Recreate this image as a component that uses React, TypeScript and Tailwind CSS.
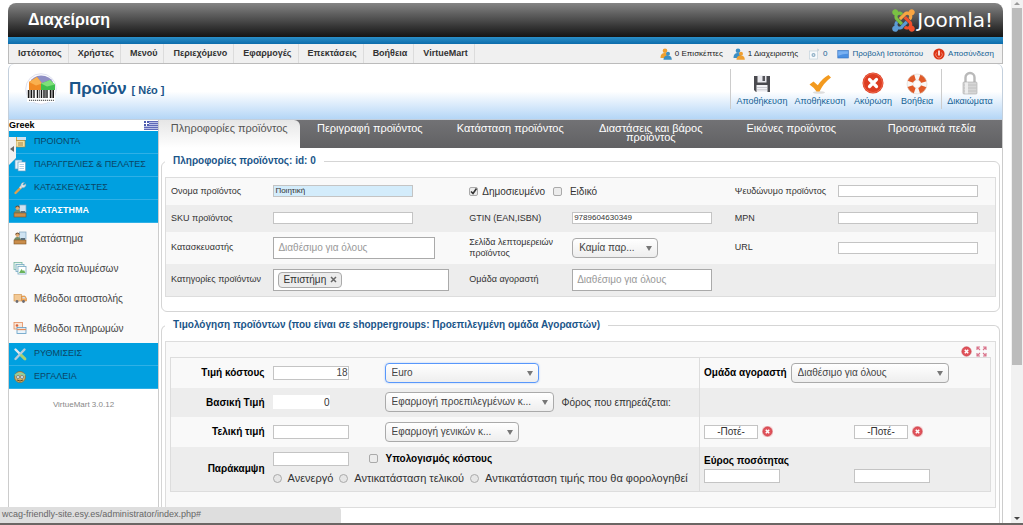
import { useState, type ReactNode } from "react";

const menuItems = [
  "Ιστότοπος",
  "Χρήστες",
  "Μενού",
  "Περιεχόμενο",
  "Εφαρμογές",
  "Επεκτάσεις",
  "Βοήθεια",
  "VirtueMart",
];

const tabs = [
  "Πληροφορίες προϊόντος",
  "Περιγραφή προϊόντος",
  "Κατάσταση προϊόντος",
  "Διαστάσεις και βάρος προϊόντος",
  "Εικόνες προϊόντος",
  "Προσωπικά πεδία",
];

function JoomlaMark() {
  return (
    <svg viewBox="0 28 448 456" className="size-[23px]" aria-hidden="true">
      <path fill="#7ac143" d="M.6 92.1C.6 58.8 27.4 32 60.4 32c30 0 54.5 21.9 59.2 50.2 32.6-7.6 67.1.6 96.5 30l-44.3 44.3c-20.5-20.5-42.6-16.3-55.4-3.5-14.3 14.3-14.3 37.9 0 52.2l99.5 99.5-44 44.3c-87.7-87.2-49.7-49.7-99.8-99.7-26.8-26.5-35-64.8-24.8-98.9C20.4 144.6.6 120.7.6 92.1z" />
      <path fill="#f9a541" d="M130.1 208.5l44.3 44.3c10-10 89.7-89.7 99.7-99.8 14.3-14.3 37.6-14.3 51.9 0 12.8 12.8 17 35-3.5 55.4l44 44.3c31.2-31.2 38.5-67.6 28.9-101.2 29.2-4.1 51.9-29.2 51.9-59.5 0-33.2-26.8-60.1-59.8-60.1-30.3 0-55.4 22.5-59.5 51.6-33.8-9.9-71.7-1.5-98.3 25.1-18.3 19.1-71.1 71.5-99.6 99.9z" />
      <path fill="#f2502c" d="M396.4 360.7c8.2-32.7-.9-68.5-26.3-93.9-11.8-12.2 5 4.7-99.5-99.7l-44.3 44.3 99.7 99.7c14.3 14.3 14.3 37.6 0 51.9-12.8 12.8-35 17-55.4-3.5l-44 44.3c27.6 30.2 68 38.8 102.7 28 5.5 27.4 29.7 48.1 58.9 48.1 33 0 59.8-26.8 59.8-60.1 0-30.2-22.5-55-51.6-59.1z" />
      <path fill="#5b9bd5" d="M312.1 307.6l-44-44.3c-87 86.4-50.4 50.4-99.7 99.8-14.3 14.3-37.6 14.3-51.9 0-13.1-13.4-16.9-35.3 3.2-55.4l-44-44.3c-30.2 30.2-38 65.2-29.5 98.3-26.7 6-46.2 29.9-46.2 58.2C0 453.2 26.8 480 59.8 480c28.6 0 52.5-19.8 58.6-46.7 32.7 8.2 68.5-.6 94.2-26 32.1-32 12.2-12.4 99.5-99.7z" />
    </svg>
  );
}

function UsersIcon({ front = "#3c8fc4", back = "#f0a030" }: { front?: string; back?: string }) {
  return (
    <svg viewBox="0 0 12 12" className="size-3" aria-hidden="true">
      <circle cx="5" cy="2.8" r="2.3" fill={back} />
      <path d="M0.5 10c0-4 2-5 4.5-5s3.500 1.500 3.500 5z" fill={back} />
      <circle cx="8" cy="5.800" r="2" fill={front} />
      <path d="M3.500 11.800c0-3.200 2-4.300 4.300-4.300s4 1.100 4 4.300z" fill={front} />
    </svg>
  );
}

function MailIcon() {
  return (
    <svg viewBox="0 0 12 12" className="size-3" aria-hidden="true">
      <rect x="1.500" y="3" width="8" height="8" fill="#f7fafc" stroke="#c4d3dd" strokeWidth=".7" />
      <circle cx="5.500" cy="7" r="2" fill="#8fb0c6" />
      <circle cx="5.500" cy="7" r=".8" fill="#f7fafc" />
      <path d="M9 1l2 1-2 1" fill="none" stroke="#c4d3dd" />
    </svg>
  );
}

function ScreenIcon() {
  return (
    <svg viewBox="0 0 12 12" className="size-3" aria-hidden="true">
      <rect x=".8" y="2.500" width="10.500" height="7.500" fill="#4b90e2" stroke="#2f6fc0" strokeWidth=".6" />
      <path d="M1.200 3.200h9.700v2.500q-5 0-9.700 2z" fill="#79b1f2" />
    </svg>
  );
}

function PowerIcon() {
  return (
    <svg viewBox="0 0 12 12" className="size-3" aria-hidden="true">
      <circle cx="6" cy="6" r="5.600" fill="#dc3415" />
      <path d="M6 2.500v5" stroke="#fff" strokeWidth="1.600" />
      <path d="M3.500 4.500a3.300 3.300 0 1 0 5 0" fill="none" stroke="#f29a86" strokeWidth=".8" />
    </svg>
  );
}

function ProductIcon() {
  return (
    <svg viewBox="0 0 32 32" className="size-8" aria-hidden="true">
      <circle cx="16" cy="16" r="15.300" fill="#fdfdff" stroke="#d6d9ea" strokeWidth=".8" />
      <path d="M5 9q3-6 11-6.500Q25 3 28 9l-5 3H10z" fill="#8f8fc4" />
      <path d="M4 9l8-5 5 6.500V18H4z" fill="#f08a24" />
      <path d="M4 9l8-5 5 6.500-6 2z" fill="#f9b04f" />
      <path d="M16 10.500L25 7l5 4.500V18H16z" fill="#3fbf4f" />
      <path d="M16 10.500L25 7l5 4.500-8 2z" fill="#7fe07a" />
      <rect x="2" y="17" width="28" height="12" fill="#fff" />
      <path d="M3.500 17v8M6.500 17v8M9 17v8M12.500 17v8M16.500 17v8M19 17v8M22 17v8M25.500 17v8M28.300 17v8" stroke="#161616" strokeWidth="1.400" />
      <path d="M5 17v8M14.500 17v8M20.500 17v8M27 17v8" stroke="#161616" strokeWidth=".6" />
      <path d="M4 27.300h25" stroke="#666" strokeWidth="1.200" strokeDasharray="1.200 .8" />
    </svg>
  );
}

function FloppyIcon() {
  return (
    <svg viewBox="0 0 24 24" className="size-6" aria-hidden="true">
      <path d="M4 5h16v16H6l-2-2z" fill="#4a4a4f" />
      <rect x="7.500" y="4.500" width="9" height="7" fill="#e9e9ee" />
      <rect x="12.500" y="5" width="2.500" height="5" fill="#55555a" />
      <rect x="6.500" y="14" width="11" height="7" fill="#f3f3f6" />
      <path d="M7 16.500h10M7 18.800h10" stroke="#c9c9d0" />
    </svg>
  );
}

function CheckIcon() {
  return (
    <svg viewBox="0 0 24 24" className="size-6" aria-hidden="true">
      <ellipse cx="11" cy="21.500" rx="6" ry="1.300" fill="#ddd" />
      <path d="M1.500 13.500l4-3 4.300 3.800Q14 7.500 20.500 4l2.500 2.500Q15.500 12 11.500 20.500H8.500Q6 16.500 1.500 13.500z" fill="#f39a1f" />
    </svg>
  );
}

function CancelIcon() {
  return (
    <svg viewBox="0 0 24 24" className="size-6" aria-hidden="true">
      <circle cx="12" cy="12" r="10.500" fill="#dd3d22" />
      <circle cx="12" cy="12" r="9.500" fill="none" stroke="#ee6a50" strokeWidth="1" />
      <path d="M8.500 8.500l7 7M15.500 8.500l-7 7" stroke="#fff" strokeWidth="3.200" strokeLinecap="round" />
    </svg>
  );
}

function SmallCancelIcon() {
  return (
    <svg viewBox="0 0 11 11" className="size-[11px]" aria-hidden="true">
      <circle cx="5.500" cy="5.500" r="4.700" fill="#e0525a" stroke="#c8404a" strokeWidth=".6" />
      <path d="M3.800 3.800l3.400 3.400M7.200 3.800L3.800 7.200" stroke="#fff" strokeWidth="1.600" />
    </svg>
  );
}

function LifebuoyIcon() {
  return (
    <svg viewBox="0 0 24 24" className="size-6" aria-hidden="true">
      <circle cx="12" cy="13" r="7" fill="none" stroke="#f9f6f4" strokeWidth="6" />
      <circle cx="12" cy="13" r="7" fill="none" stroke="#e05a28" strokeWidth="6" strokeDasharray="6.500 4.496" strokeDashoffset="-2.250" />
      <circle cx="12" cy="13" r="10" fill="none" stroke="#dcd3cd" strokeWidth=".6" />
      <circle cx="12" cy="13" r="3.800" fill="#fdfdfd" stroke="#ddd" strokeWidth=".5" />
    </svg>
  );
}

function LockIcon() {
  return (
    <svg viewBox="0 0 24 24" className="size-6" aria-hidden="true">
      <path d="M7.500 12V6.500a4.500 4.500 0 0 1 9 0V12" fill="none" stroke="#b9b9b9" strokeWidth="2.400" />
      <rect x="5" y="11" width="14" height="12" rx="1" fill="#d6d6d6" stroke="#aaa" strokeWidth=".6" />
      <path d="M5.500 14h13M5.500 17h13M5.500 20h13" stroke="#bdbdbd" strokeWidth=".8" />
      <rect x="7" y="11.500" width="3" height="11" fill="#ececec" />
    </svg>
  );
}

function SideIcon({ kind }: { kind: string }) {
  return (
    <svg viewBox="0 0 14 14" className="size-3.5 shrink-0" aria-hidden="true">
      {kind === "products" && (
        <>
          <rect x="1" y="2" width="10" height="10" fill="#d9a441" />
          <path d="M4 2h9v3H4z" fill="#cfe3f2" />
          <rect x="3" y="5.500" width="9" height="6.500" fill="#f3dfa0" stroke="#a98238" strokeWidth=".6" />
          <path d="M5 8h5M5 10h5" stroke="#8a6d35" strokeWidth=".8" />
        </>
      )}
      {kind === "orders" && (
        <>
          <rect x="2" y="2" width="7" height="9" fill="#e6f2fa" stroke="#5f9cc4" strokeWidth=".7" />
          <rect x="5" y="4" width="7.500" height="9" fill="#fff" stroke="#5f9cc4" strokeWidth=".7" />
          <path d="M6.500 6.500h4.500M6.500 8.500h4.500M6.500 10.500h4.500" stroke="#9cc4de" strokeWidth=".8" />
        </>
      )}
      {kind === "wrench" && (
        <>
          <path d="M2.500 12L8 6.500" stroke="#e2a04a" strokeWidth="2.400" strokeLinecap="round" />
          <path d="M7 7l2-2" stroke="#dfe6ea" strokeWidth="2.400" />
          <path d="M8 5.500a3 3 0 0 1 3.500-4L9.800 3.300l1 1 2-1.500a3 3 0 0 1-4 3.700z" fill="#dfe6ea" stroke="#8aa0ad" strokeWidth=".5" />
        </>
      )}
      {kind === "shop" && (
        <>
          <rect x="6.500" y="1" width="6.500" height="7" fill="#cfe3f2" stroke="#7fa6c2" strokeWidth=".7" />
          <circle cx="4.500" cy="4" r="2" fill="#e0ab72" />
          <path d="M2.500 3.500q2-3 4 0" fill="none" stroke="#6a4a2c" strokeWidth="1.200" />
          <path d="M1 10q0-4 3.500-4T8 10z" fill="#6f8c6a" />
          <rect x="1" y="9" width="12" height="4" fill="#c98d4b" stroke="#7d5527" strokeWidth=".6" />
          <path d="M8 7h4v2H8z" fill="#5b6c78" />
        </>
      )}
      {kind === "media" && (
        <>
          <rect x="1" y="1.500" width="8" height="7" fill="#e8f5ee" stroke="#74b3a0" strokeWidth=".8" />
          <rect x="3" y="3.500" width="8" height="7" fill="#e8f5ee" stroke="#74a9c4" strokeWidth=".8" />
          <rect x="5" y="5.500" width="8" height="7.500" fill="#fff" stroke="#74a9c4" strokeWidth=".8" />
          <path d="M6 12l2.500-4 1.500 2 1-1 1.500 3z" fill="#69b35a" />
        </>
      )}
      {kind === "truck" && (
        <>
          <rect x="1" y="3.500" width="7.500" height="6.500" fill="#f3c995" stroke="#d49a55" strokeWidth=".7" />
          <path d="M8.500 5H12l1.500 2.500V10h-5z" fill="#f3a95c" stroke="#d48a3d" strokeWidth=".6" />
          <path d="M9.500 6h2l1 1.500h-3z" fill="#cfe3f2" />
          <circle cx="4" cy="10.500" r="1.400" fill="#6b6b72" />
          <circle cx="10.500" cy="10.500" r="1.400" fill="#6b6b72" />
        </>
      )}
      {kind === "payment" && (
        <>
          <rect x="1" y="1.500" width="8.500" height="6.500" fill="#fbe6d6" stroke="#e38e5e" strokeWidth=".8" />
          <circle cx="4" cy="4.500" r="1.300" fill="#d9653b" />
          <rect x="4" y="6.500" width="9" height="6" fill="#eaf4fb" stroke="#5f9cc4" strokeWidth=".8" />
          <path d="M4 8.500h9" stroke="#e38e5e" strokeWidth="1.300" />
        </>
      )}
      {kind === "settings" && (
        <>
          <path d="M2.500 2.500l9 9" stroke="#e3e9ee" strokeWidth="2.400" strokeLinecap="round" />
          <path d="M11.500 2.500l-9 9.500" stroke="#b7cbd8" strokeWidth="2.400" strokeLinecap="round" />
          <path d="M8.500 8.500l3.500 3.500" stroke="#a9cf6e" strokeWidth="2.800" strokeLinecap="round" />
        </>
      )}
      {kind === "tools" && (
        <>
          <circle cx="7" cy="7" r="5.500" fill="#d2b06a" stroke="#7f6a35" strokeWidth=".7" />
          <path d="M2 5.500q5-4 10 0" fill="none" stroke="#8fd0a0" strokeWidth="2" />
          <circle cx="5" cy="7" r="1.500" fill="#e9f3f7" stroke="#54707c" strokeWidth=".7" />
          <circle cx="9" cy="7" r="1.500" fill="#e9f3f7" stroke="#54707c" strokeWidth=".7" />
          <path d="M4 10q3 2 6 0" fill="none" stroke="#6b4d1f" />
        </>
      )}
    </svg>
  );
}

function GreekFlag() {
  return (
    <svg viewBox="0 0 14 9" className="h-[9px] w-3.5" aria-hidden="true">
      <rect width="14" height="9" fill="#b9bfe6" />
      <path d="M0 .5h14M0 2.500h14M0 4.500h14M0 6.500h14M0 8.500h14" stroke="#5f69b8" />
      <rect width="5" height="5" fill="#4d5bb0" />
      <path d="M2.500 0v5M0 2.500h5" stroke="#fff" />
    </svg>
  );
}

function StatusItem({ icon, children, link }: { icon: ReactNode; children: ReactNode; link?: boolean }) {
  const body = (
    <>
      {icon}
      {children}
    </>
  );
  return link ? (
    <a href="#" className="flex items-center gap-[3px] text-[#146295]">{body}</a>
  ) : (
    <span className="flex items-center gap-[3px] text-[#222]">{body}</span>
  );
}

function ToolButton({ icon, label, width }: { icon: ReactNode; label: string; width: string }) {
  return (
    <button type="button" className={`flex flex-col items-center text-[9px] leading-3 text-[#146295] ${width}`}>
      {icon}
      {label}
    </button>
  );
}

function SideHead({ kind, label, active }: { kind: string; label: string; active?: boolean }) {
  return (
    <a
      href="#"
      className={`flex h-[23px] items-center gap-[7px] border-b border-[#2fb0e6] bg-[#00a0e0] pl-1 text-[9px] whitespace-nowrap ${active ? "font-bold text-white" : "text-[#0b4666]"}`}
    >
      <SideIcon kind={kind} />
      {label}
    </a>
  );
}

function SideLink({ kind, label }: { kind: string; label: string }) {
  return (
    <a href="#" className="flex h-[30px] items-center gap-[7px] pl-1 text-[10px] text-[#444]">
      <SideIcon kind={kind} />
      {label}
    </a>
  );
}

function Tick({ id, checked }: { id: string; checked?: boolean }) {
  return (
    <span className="relative inline-block size-[9px] shrink-0">
      <input
        id={id}
        type="checkbox"
        defaultChecked={checked}
        className="peer block size-[9px] appearance-none rounded-[2px] border border-[#aaa] bg-[#ececec]"
      />
      <svg viewBox="0 0 9 9" className="pointer-events-none absolute inset-0 hidden size-[9px] peer-checked:block" aria-hidden="true">
        <path d="M2 4.500l2 2 3.500-5" fill="none" stroke="#333" strokeWidth="1.600" />
      </svg>
    </span>
  );
}

function TextInput({ id, label, value = "", className }: { id: string; label?: string; value?: string; className: string }) {
  return (
    <input
      id={id}
      aria-label={label}
      type="text"
      defaultValue={value}
      className={`block border border-[#c4c4c4] outline-none ${className}`}
    />
  );
}

function Picker({ id, label, option, width, focused }: { id: string; label?: string; option: string; width: string; focused?: boolean }) {
  return (
    <span className={`relative inline-block ${width}`}>
      <select
        id={id}
        aria-label={label}
        className={`block h-5 w-full appearance-none rounded border bg-linear-to-b from-white to-[#eeeeee] pl-1.5 text-[10px] leading-4 text-[#444] outline-none ${focused ? "border-[#5897fb] shadow-[0_0_2px_#a9c8f5]" : "border-[#aaa]"}`}
      >
        <option>{option}</option>
      </select>
      <svg viewBox="0 0 6 5" className="pointer-events-none absolute top-2 right-1.5 h-[5px] w-1.5" aria-hidden="true">
        <path d="M0 0h6L3 5z" fill="#777" />
      </svg>
    </span>
  );
}

const cellLabel = "pl-[5px] text-left text-[9px] font-normal leading-[11px]";
const priceLabel = "pr-2 text-right text-[10px] text-black";
const boxInput = "h-3 w-[140px] bg-white px-px text-[8px]";
const priceInput = "h-3.5 w-[76px] bg-white text-right text-[10px] text-[#444]";

export default function App() {
  const [override, setOverride] = useState("");
  return (
    <div className="flex h-screen overflow-hidden bg-white font-['Liberation_Sans',Arial,sans-serif] text-[10px] text-[#333]">
      <div className="flex min-w-0 flex-1 flex-col pt-[3px] pr-2 pl-2">
        <header>
          <div className="flex h-[34px] items-center justify-between rounded-t-lg bg-linear-to-b from-[#858585] via-[#4c4c4c] to-[#151515] pr-2.5 pl-5">
            <h1 className="text-[16px] font-bold text-white">Διαχείριση</h1>
            <div className="flex items-center gap-0.5 font-['DejaVu_Sans',sans-serif] text-[20px] leading-6 text-white">
              <JoomlaMark />
              <span>Joomla!</span>
            </div>
          </div>
          <div className="h-[7px] bg-linear-to-b from-[#2a8fc8] to-[#0b6cab]" />
          <div className="flex h-5 items-center justify-between border-x border-b border-[#bbb] bg-[#f0f0f0]">
            <nav className="flex h-full text-[9px] font-bold text-[#333]">
              {menuItems.map((item) => (
                <a key={item} href="#" className="flex items-center border-r border-[#dcdcdc] pr-1.5 pl-[9px]">
                  {item}
                </a>
              ))}
            </nav>
            <div className="flex items-center gap-2.5 pr-2 text-[8px]">
              <StatusItem icon={<UsersIcon />}>0 Επισκέπτες</StatusItem>
              <StatusItem icon={<UsersIcon front="#f0a030" back="#3c8fc4" />}>1 Διαχειριστής</StatusItem>
              <StatusItem icon={<MailIcon />} link>0</StatusItem>
              <StatusItem icon={<ScreenIcon />} link>Προβολή Ιστοτόπου</StatusItem>
              <StatusItem icon={<PowerIcon />} link>Αποσύνδεση</StatusItem>
            </div>
          </div>
          <div className="flex h-14 items-center justify-between rounded-t-md border-x border-b border-[#c3cfdc] bg-linear-to-b from-white from-50% to-[#b4d6f6] pr-2 pb-1.5 pl-4">
            <div className="flex items-center gap-3">
              <ProductIcon />
              <h2 className="text-[17px] font-bold text-[#1a5589]">
                Προϊόν <small className="text-[11px]">[ Νέο ]</small>
              </h2>
            </div>
            <div className="flex items-center">
              <div className="flex h-10 items-center gap-2 border-l border-[#ccc] pr-2 pl-1.5">
                <ToolButton icon={<FloppyIcon />} label="Αποθήκευση" width="w-[50px]" />
                <ToolButton icon={<CheckIcon />} label="Αποθήκευση" width="w-[50px]" />
                <ToolButton icon={<CancelIcon />} label="Ακύρωση" width="w-10" />
                <ToolButton icon={<LifebuoyIcon />} label="Βοήθεια" width="w-8" />
              </div>
              <div className="flex h-10 items-center border-l border-[#ccc] pl-1">
                <ToolButton icon={<LockIcon />} label="Δικαιώματα" width="w-12" />
              </div>
            </div>
          </div>
        </header>

        <div className="flex min-h-0 flex-1">
          <aside className="relative w-[151px] shrink-0 border-x border-[#ccc]">
            <div className="flex h-[11px] items-center justify-between text-[9px] leading-[11px] font-bold text-black">
              Greek
              <GreekFlag />
            </div>
            <nav>
              <SideHead kind="products" label="ΠΡΟΙΟΝΤΑ" />
              <SideHead kind="orders" label="ΠΑΡΑΓΓΕΛΙΕΣ & ΠΕΛΑΤΕΣ" />
              <SideHead kind="wrench" label="ΚΑΤΑΣΚΕΥΑΣΤΕΣ" />
              <SideHead kind="shop" label="ΚΑΤΑΣΤΗΜΑ" active />
              <div className="bg-[#fafafa]">
                <SideLink kind="shop" label="Κατάστημα" />
                <SideLink kind="media" label="Αρχεία πολυμέσων" />
                <SideLink kind="truck" label="Μέθοδοι αποστολής" />
                <SideLink kind="payment" label="Μέθοδοι πληρωμών" />
              </div>
              <SideHead kind="settings" label="ΡΥΘΜΙΣΕΙΣ" />
              <SideHead kind="tools" label="ΕΡΓΑΛΕΙΑ" />
            </nav>
            <p className="pt-2.5 text-center text-[8px] text-[#888]">VirtueMart 3.0.12</p>
            <button type="button" aria-label="Σύμπτυξη μενού" className="absolute top-[17px] left-0 h-7 w-[7px]">
              <svg viewBox="0 0 7 28" className="h-7 w-[7px]" aria-hidden="true">
                <path d="M0 0h7v21l-7 7z" fill="#f1f1f1" />
                <path d="M5 9v6l-4-3z" fill="#666" />
              </svg>
            </button>
          </aside>

          <main className="min-w-0 flex-1 border-r border-[#ccc]">
            <div role="tablist" className="flex h-[28px] bg-linear-to-b from-[#727275] to-[#616163]">
              {tabs.map((tab, index) => (
                <button
                  key={tab}
                  type="button"
                  role="tab"
                  aria-selected={index === 0}
                  className={`flex min-w-0 flex-1 justify-center px-4 pt-1 text-[11px] leading-[9px] ${index === 0 ? "rounded-tr-md bg-linear-to-b from-[#e6e6e6] to-white whitespace-nowrap text-[#555]" : "text-white"}`}
                >
                  {tab}
                </button>
              ))}
            </div>

            <fieldset className="mx-0.5 mt-[7px] rounded-md border border-[#d5d5d5] px-[3px] pb-3.5">
              <legend className="px-2 text-[10px] leading-3 font-bold text-[#1a5589]">Πληροφορίες προϊόντος: id: 0</legend>
              <table className="mt-2.5 w-full table-fixed border border-[#ddd]">
                <colgroup>
                  <col className="w-[13%]" />
                  <col className="w-[23%]" />
                  <col className="w-[13%]" />
                  <col className="w-[19%]" />
                  <col className="w-[13%]" />
                  <col className="w-[19%]" />
                </colgroup>
                <tbody>
                  <tr className="h-[27px] bg-[#f9f9f9]">
                    <th className={cellLabel}><label htmlFor="name">Ονομα προϊόντος</label></th>
                    <td><TextInput id="name" value="Ποιητική" className="h-3 w-[140px] bg-[#d3ecfb] px-px text-[8px]" /></td>
                    <td colSpan={2} className="pl-[5px]">
                      <div className="flex items-center gap-1 text-[10px]">
                        <Tick id="published" checked />
                        <label htmlFor="published" className="pr-1">Δημοσιευμένο</label>
                        <Tick id="special" />
                        <label htmlFor="special" className="pl-1">Ειδικό</label>
                      </div>
                    </td>
                    <th className={cellLabel}><label htmlFor="alias">Ψευδώνυμο προϊόντος</label></th>
                    <td><TextInput id="alias" className={boxInput} /></td>
                  </tr>
                  <tr className="h-[27px] bg-[#ededed]">
                    <th className={cellLabel}><label htmlFor="sku">SKU προϊόντος</label></th>
                    <td><TextInput id="sku" className={boxInput} /></td>
                    <th className={cellLabel}><label htmlFor="gtin">GTIN (EAN,ISBN)</label></th>
                    <td><TextInput id="gtin" value="9789604630349" className={boxInput} /></td>
                    <th className={cellLabel}><label htmlFor="mpn">MPN</label></th>
                    <td><TextInput id="mpn" className={boxInput} /></td>
                  </tr>
                  <tr className="h-8 bg-[#f9f9f9]">
                    <th className={cellLabel}><label htmlFor="maker">Κατασκευαστής</label></th>
                    <td>
                      <input id="maker" placeholder="Διαθέσιμο για όλους" className="block h-[22px] w-[162px] border border-[#aaa] bg-white px-1 text-[10px] placeholder:text-[#999]" />
                    </td>
                    <th className={cellLabel}><label htmlFor="details">Σελίδα λεπτομερειών<br />προϊόντος</label></th>
                    <td><Picker id="details" option="Καμία παρ..." width="w-[86px]" /></td>
                    <th className={cellLabel}><label htmlFor="url">URL</label></th>
                    <td><TextInput id="url" className={boxInput} /></td>
                  </tr>
                  <tr className="h-[33px] bg-[#ededed]">
                    <th className={cellLabel}><label htmlFor="categories">Κατηγορίες προϊόντων</label></th>
                    <td>
                      <div className="flex h-[22px] w-[176px] items-center border border-[#aaa] bg-white pl-1">
                        <span className="flex h-4 items-center gap-1 rounded-sm border border-[#aaa] bg-[#ececec] px-1 text-[10px]">
                          Επιστήμη
                          <button type="button" aria-label="Αφαίρεση">
                            <svg viewBox="0 0 7 7" className="size-[7px]" aria-hidden="true">
                              <path d="M1 1l5 5M6 1L1 6" stroke="#666" strokeWidth="1.500" />
                            </svg>
                          </button>
                        </span>
                        <input id="categories" className="w-0 flex-1 outline-none" />
                      </div>
                    </td>
                    <th className={cellLabel}><label htmlFor="buyers">Ομάδα αγοραστή</label></th>
                    <td>
                      <input id="buyers" placeholder="Διαθέσιμο για όλους" className="block h-[22px] w-[140px] border border-[#aaa] bg-white px-1 text-[10px] placeholder:text-[#999]" />
                    </td>
                    <td colSpan={2} />
                  </tr>
                </tbody>
              </table>
            </fieldset>

            <fieldset className="mx-0.5 mt-[7px] rounded-t-md border border-b-0 border-[#d5d5d5] px-[3px] pb-5">
              <legend className="px-2 text-[10px] leading-3 font-bold text-[#1a5589]">
                Τιμολόγηση προϊόντων (που είναι σε shoppergroups: Προεπιλεγμένη ομάδα Αγοραστών)
              </legend>
              <div className="mt-2.5 border border-[#ddd] bg-[#f9f9f9] px-1 pb-[15px]">
                <div className="flex h-[15px] items-end justify-end gap-1 pr-1">
                  <button type="button" aria-label="Διαγραφή τιμής"><SmallCancelIcon /></button>
                  <button type="button" aria-label="Μετακίνηση">
                    <svg viewBox="0 0 11 11" className="size-[11px]" aria-hidden="true">
                      <path d="M1 4V1h3M7 1h3v3M10 7v3H7M4 10H1V7M1 1l3 3M10 1L7 4M10 10L7 7M1 10l3-3" fill="none" stroke="#d9728a" strokeWidth="1.100" />
                    </svg>
                  </button>
                </div>
                <table className="w-full table-fixed border border-[#ddd]">
                  <colgroup>
                    <col className="w-[102px]" />
                    <col />
                    <col className="w-[291px]" />
                  </colgroup>
                  <tbody>
                    <tr className="h-[30px]">
                      <th className={priceLabel}><label htmlFor="cost">Τιμή κόστους</label></th>
                      <td>
                        <div className="flex items-center gap-9">
                          <TextInput id="cost" value="18" className={priceInput} />
                          <Picker id="currency" label="Νόμισμα" option="Euro" width="w-[154px]" focused />
                        </div>
                      </td>
                      <td className="border-l border-[#ddd] pl-1">
                        <div className="flex items-center gap-1">
                          <label htmlFor="group" className="text-[10px] font-bold whitespace-nowrap text-black">Ομάδα αγοραστή</label>
                          <Picker id="group" option="Διαθέσιμο για όλους" width="w-[158px]" />
                        </div>
                      </td>
                    </tr>
                    <tr className="h-[29px] bg-[#ededed]">
                      <th className={priceLabel}><label htmlFor="base">Βασική Τιμή</label></th>
                      <td>
                        <div className="flex items-center gap-2">
                          <div className="flex w-[104px]">
                            <input id="base" defaultValue="0" className="h-3.5 w-[57px] bg-white text-right text-[10px] outline-none" />
                          </div>
                          <Picker id="tax" label="Φόρος" option="Εφαρμογή προεπιλεγμένων κ..." width="w-[169px]" />
                          <span className="whitespace-nowrap">Φόρος που επηρεάζεται:</span>
                        </div>
                      </td>
                      <td className="border-l border-[#ddd]" />
                    </tr>
                    <tr className="h-[30px]">
                      <th className={priceLabel}><label htmlFor="final">Τελική τιμή</label></th>
                      <td>
                        <div className="flex items-center gap-9">
                          <TextInput id="final" className={priceInput} />
                          <Picker id="discount" label="Έκπτωση" option="Εφαρμογή γενικών κ..." width="w-[134px]" />
                        </div>
                      </td>
                      <td className="border-l border-[#ddd] pl-1">
                        <div className="flex">
                          {["Από", "Έως"].map((label) => (
                            <div key={label} className="flex w-[150px] shrink-0 items-center gap-1 last:w-auto">
                              <input aria-label={label} defaultValue="-Ποτέ-" className="h-3.5 w-[54px] border border-[#c4c4c4] bg-white text-center text-[10px]" />
                              <button type="button" aria-label="Καθαρισμός" className="rounded-sm bg-[#f6dede]">
                                <SmallCancelIcon />
                              </button>
                            </div>
                          ))}
                        </div>
                      </td>
                    </tr>
                    <tr className="h-[45px] bg-[#ededed]">
                      <th className={priceLabel}><label htmlFor="override">Παράκαμψη</label></th>
                      <td>
                        <div className="flex items-center gap-5">
                          <TextInput id="override" className={priceInput} />
                          <span className="flex items-center gap-2 text-[10px] font-bold text-black">
                            <Tick id="calc" />
                            <label htmlFor="calc">Υπολογισμός κόστους</label>
                          </span>
                        </div>
                        <div className="mt-1 flex items-center gap-1.5 text-[11px] whitespace-nowrap">
                          {["Ανενεργό", "Αντικατάσταση τελικού", "Αντικατάσταση τιμής που θα φορολογηθεί"].map((label) => (
                            <label key={label} className="flex items-center gap-1.5">
                              <input
                                type="radio"
                                name="mode"
                                className="size-[9px] appearance-none rounded-full border border-[#aaa] bg-[#e6e6e6] checked:bg-[#555]"
                                checked={override === label}
                                onChange={() => setOverride(label)}
                              />
                              {label}
                            </label>
                          ))}
                        </div>
                      </td>
                      <td className="border-l border-[#ddd] pl-1">
                        <div className="pb-0.5 text-[10px] leading-3 font-bold text-black">Εύρος ποσότητας</div>
                        <div className="flex">
                          <div className="w-[150px]"><TextInput id="min" label="Ελάχιστη ποσότητα" className={priceInput} /></div>
                          <TextInput id="max" label="Μέγιστη ποσότητα" className={priceInput} />
                        </div>
                      </td>
                    </tr>
                  </tbody>
                </table>
              </div>
            </fieldset>
          </main>
        </div>
      </div>

      <div className="flex w-3 shrink-0 flex-col items-center bg-[#f1f1f1]" aria-hidden="true">
        <svg viewBox="0 0 12 8" className="h-2 w-3 shrink-0"><path d="M3 5l3-3 3 3z" fill="#999" /></svg>
        <div className="h-[68%] w-2.5 bg-[#bcbcbc]" />
        <div className="flex-1" />
        <svg viewBox="0 0 12 12" className="size-3 shrink-0"><path d="M3 4l3 3 3-3z" fill="#444" /></svg>
      </div>

      <div className="fixed inset-x-0 bottom-0 border-b-2 border-[#6b6664]">
        <div className="flex h-4 w-1/3 items-center rounded-tr-sm bg-[#dedede] pl-0.5 text-[9px] text-[#666]">
          wcag-friendly-site.esy.es/administrator/index.php#
        </div>
      </div>
    </div>
  );
}
